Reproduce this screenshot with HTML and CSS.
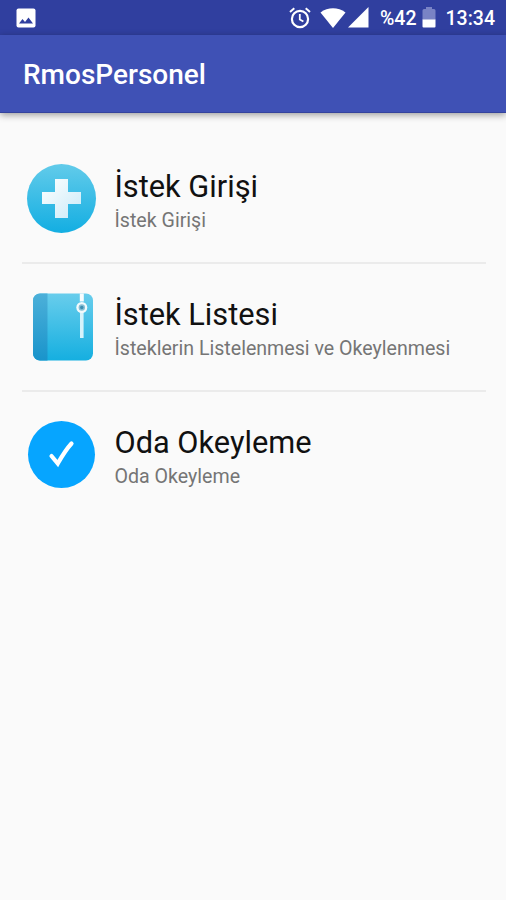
FILE: index.html
```html
<!DOCTYPE html>
<html lang="tr">
<head>
<meta charset="utf-8">
<title>RmosPersonel</title>
<link rel="stylesheet" href="styles.css">
</head>
<body>
<div class="status">
  <svg class="photo" width="20" height="20" viewBox="0 0 20 20"><rect x=".5" y=".5" width="19" height="19" rx="2" fill="#fff"/><path d="M3 15.5 6.5 11 9 14 12.5 9.5 17 15.5z" fill="#303f9f"/></svg>
  <svg class="alarm" width="22" height="22" viewBox="0 0 22 22" fill="none" stroke="#fff"><circle cx="11" cy="12" r="8.1" stroke-width="2.2"/><path d="M1 5 5.3 1.3M21 5 16.7 1.3" stroke-width="2"/><path d="M10.8 7v5.4l3.6 2.2" stroke-width="1.8"/></svg>
  <svg class="wifi" width="26" height="20" viewBox="0 0 26 20"><path d="M.5 4.5C8-1.1 18-1.1 25.500 4.500L13 20z" fill="#fff"/></svg>
  <svg class="signal" width="21" height="21" viewBox="0 0 21 21"><path d="M20.500 0V20.500H0z" fill="#fff"/></svg>
  <span class="percent">%42</span>
  <svg class="battery" width="14" height="21" viewBox="0 0 14 21"><path d="M4 0h6v2h2a1.500 1.500 0 0 1 1.500 1.500V13H.5V3.500A1.500 1.500 0 0 1 2 2h2z" fill="#7983c5"/><path d="M.5 12.500h13v7a1 1 0 0 1-1 1h-11a1 1 0 0 1-1-1z" fill="#fff"/></svg>
  <span class="clock">13:34</span>
</div>
<header class="appbar"><h1>RmosPersonel</h1></header>
<main class="list">
  <div class="row">
    <svg class="icon" width="72" height="72" viewBox="0 0 72 72">
      <defs>
        <linearGradient id="sky" x1="0" y1="0" x2="0" y2="1"><stop offset="0" stop-color="#62cbea"/><stop offset="1" stop-color="#13aee2"/></linearGradient>
        <linearGradient id="cross" x1="0" y1="0" x2="1" y2="1"><stop offset="0" stop-color="#fff"/><stop offset="1" stop-color="#c9eaf8"/></linearGradient>
      </defs>
      <circle cx="36.500" cy="35.500" r="34.500" fill="url(#sky)"/>
      <path d="M30 16h13v13h13v12h-13v14h-13v-14h-13v-12h13z" fill="url(#cross)"/>
    </svg>
    <div class="text"><h2>İstek Girişi</h2><p>İstek Girişi</p></div>
  </div>
  <div class="row">
    <svg class="icon" width="72" height="72" viewBox="0 0 72 72">
      <defs>
        <linearGradient id="book" x1="0" y1="0" x2="0" y2="1"><stop offset="0" stop-color="#68cdec"/><stop offset="1" stop-color="#15afe0"/></linearGradient>
        <linearGradient id="spine" x1="0" y1="0" x2="0" y2="1"><stop offset="0" stop-color="#4cb0d9"/><stop offset="1" stop-color="#1994cb"/></linearGradient>
      </defs>
      <rect x="8" y="2.500" width="60" height="67" rx="7" fill="url(#book)"/>
      <path d="M22.500 2.500H15a7 7 0 0 0-7 7v53a7 7 0 0 0 7 7h7.500z" fill="url(#spine)"/>
      <path d="M54.800 2.500h4v8h-4z" fill="#f8fdff"/>
      <path d="M55 20h3.600v27H55z" fill="#d6f3fb"/>
      <circle cx="56.800" cy="16.500" r="5.500" fill="#f3fafc"/>
      <circle cx="56.800" cy="16.500" r="3.200" fill="#86bfd5"/>
      <circle cx="56.800" cy="16.500" r="1.700" fill="#3e8daf"/>
    </svg>
    <div class="text"><h2>İstek Listesi</h2><p>İsteklerin Listelenmesi ve Okeylenmesi</p></div>
  </div>
  <div class="row">
    <svg class="icon" width="72" height="72" viewBox="0 0 72 72"><circle cx="36.500" cy="35.500" r="33.500" fill="#06a5ff"/><path d="M26.500 37 32.800 44.500C36.500 38 40.500 31 46.500 24.500" fill="none" stroke="#fff" stroke-width="4.200" stroke-linecap="round"/></svg>
    <div class="text"><h2>Oda Okeyleme</h2><p>Oda Okeyleme</p></div>
  </div>
</main>
</body>
</html>
```
FILE: styles.css
```css
* { box-sizing: border-box; }
body { margin: 0; min-height: 900px; background: #fafafa; font-family: Roboto, "Liberation Sans", sans-serif; }
svg { display: block; flex: none; }
h1, h2, p { margin: 0; }
.status { display: flex; align-items: center; height: 35px; padding: 0 11px 0 16px; background: #303f9f; color: #fff; font-size: 19.500px; font-weight: 500; }
.status span { padding-top: 2px; }
.alarm { margin-left: auto; }
.wifi { margin-left: 9px; }
.signal { margin-left: 2px; }
.percent { margin-left: 11px; }
.battery { margin-left: 5px; }
.clock { margin-left: 10px; }
.appbar { display: flex; align-items: center; height: 78px; padding: 2px 24px 0 23px; background: #3f51b5; border-bottom: 1px solid #34439d; box-shadow: 0 2px 7px rgba(0, 0, 0, .38); color: #fff; }
.appbar h1 { font-size: 28px; line-height: 32px; font-weight: 500; }
.list { padding: 23px 20px 0 22px; }
.row { display: flex; align-items: center; height: 128px; padding-left: 3px; border-bottom: 2px solid #ebebeb; }
.row:last-child { border-bottom-color: transparent; }
.text { margin-left: 17.500px; padding-top: 5px; }
.text h2 { font-size: 30.750px; line-height: 38px; font-weight: 400; color: #111; }
.text p { padding-top: 1px; font-size: 19.600px; line-height: 28px; color: #757575; }
```
